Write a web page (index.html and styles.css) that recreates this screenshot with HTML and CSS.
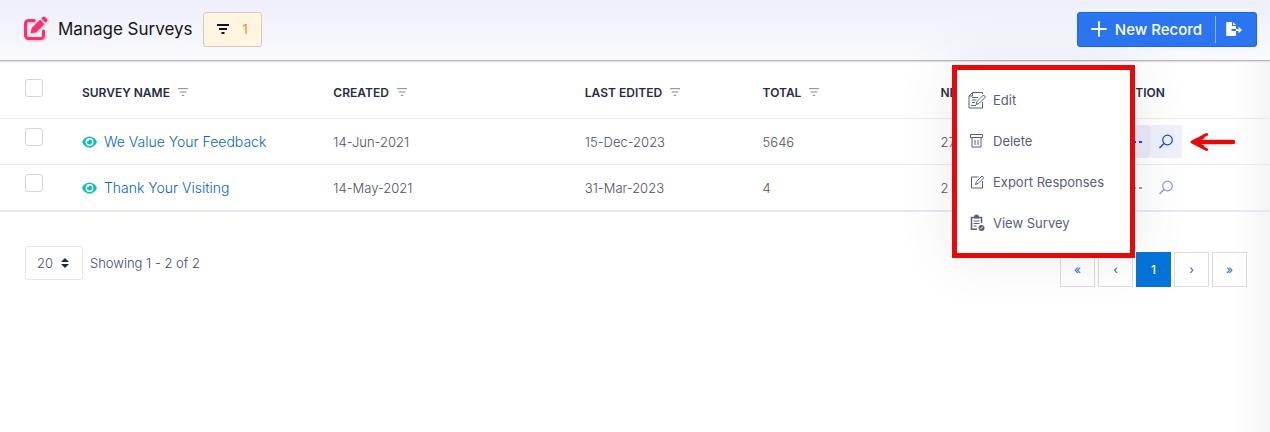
FILE: index.html
```html
<!DOCTYPE html>
<html lang="en">
<head>
  <meta charset="UTF-8" />
  <meta name="viewport" content="width=device-width, initial-scale=1.0">
  <title>Manage Surveys</title>
  <link rel="stylesheet" href="styles.css">
</head>
<body>

<!-- shared icons -->
<svg class="sprite" width="0" height="0" aria-hidden="true">
  <symbol id="filter" viewBox="0 0 14 12">
    <path d="M1 2h12M3 6h8M5.500 10h3" fill="none" stroke="currentColor" />
  </symbol>
  <symbol id="eye" viewBox="0 0 16 12">
    <path fill="currentColor" fill-rule="evenodd" d="M8 0C4.400 0 1.500 2.300 0 6c1.500 3.700 4.400 6 8 6s6.500-2.300 8-6c-1.500-3.700-4.400-6-8-6zm0 1.800a4.200 4.200 0 1 1 0 8.400 4.200 4.200 0 0 1 0-8.400z" />
    <path fill="currentColor" d="M8 3.300c-.3 0-.5 0-.7.1.4 1-.5 2.100-1.900 1.900A2.700 2.700 0 1 0 8 3.300z" />
  </symbol>
  <symbol id="search" viewBox="0 0 16 16">
    <g fill="none" stroke="currentColor" stroke-width="1.200">
      <circle cx="9.500" cy="6" r="4.800" />
      <path d="M6 9.500L1.500 14" stroke-width="1.500" />
    </g>
  </symbol>
</svg>

<header class="topbar">
  <svg class="logo" width="25" height="26" viewBox="0 0 25 26" aria-hidden="true">
    <path d="M11 4.500H5.500a3 3 0 0 0-3 3v12a3 3 0 0 0 3 3h12a3 3 0 0 0 3-3V15" fill="none" stroke="#fb2f72" stroke-width="3" stroke-linecap="round" />
    <path d="M7.500 17.500l1.200-5.500 8.400-8.400 4.300 4.300-8.400 8.400z" fill="#fb2f72" />
    <path d="M18.200 2.500l1.200-1.200a2 2 0 0 1 2.800 0l1.500 1.500a2 2 0 0 1 0 2.800l-1.200 1.200z" fill="#fb2f72" />
  </svg>
  <h1>Manage Surveys</h1>
  <button class="filter-count" type="button" aria-label="Active filters">
    <svg width="14" height="12" aria-hidden="true"><use href="#filter" /></svg>
    <span>1</span>
  </button>
  <div class="record-group">
    <button class="new-record" type="button">
      <svg width="16" height="16" viewBox="0 0 16 16" aria-hidden="true"><path d="M8 1v14M1 8h14" stroke="currentColor" stroke-width="1.800" stroke-linecap="round" /></svg>
      New Record
    </button>
    <button class="export" type="button" aria-label="Export">
      <svg width="16" height="14" viewBox="0 0 16 14" aria-hidden="true">
        <path fill="currentColor" d="M1 0h5v4h4v3H5.500v2H10v4.200a.8.800 0 0 1-.8.800H1a.8.800 0 0 1-.8-.8V.8A.8.800 0 0 1 1 0zM7 0l3 3H7zM10 7h2.500V4.800L16 8l-3.500 3.200V9H10z" />
      </svg>
    </button>
  </div>
</header>

<main>
  <table class="surveys">
    <thead>
      <tr>
        <th class="col-check"><input type="checkbox" aria-label="Select all"></th>
        <th class="col-wide">SURVEY NAME <button type="button" aria-label="Filter survey name"><svg width="12" height="10"><use href="#filter" /></svg></button></th>
        <th class="col-wide">CREATED <button type="button" aria-label="Filter created"><svg width="12" height="10"><use href="#filter" /></svg></button></th>
        <th class="col-mid">LAST EDITED <button type="button" aria-label="Filter last edited"><svg width="12" height="10"><use href="#filter" /></svg></button></th>
        <th class="col-mid">TOTAL <button type="button" aria-label="Filter total"><svg width="12" height="10"><use href="#filter" /></svg></button></th>
        <th class="col-mid">NEW</th>
        <th>ACTION</th>
      </tr>
    </thead>
    <tbody>
      <tr>
        <td class="col-check"><input type="checkbox" aria-label="Select We Value Your Feedback"></td>
        <td><a class="name" href="#"><svg width="15" height="12"><use href="#eye" /></svg>We Value Your Feedback</a></td>
        <td>14-Jun-2021</td>
        <td>15-Dec-2023</td>
        <td>5646</td>
        <td>27</td>
        <td>
          <div class="actions active">
            <button class="more" type="button" aria-label="More actions"><i></i><i></i><i></i></button>
            <button type="button" aria-label="View"><svg width="16" height="16"><use href="#search" /></svg></button>
            <svg class="pointer" width="47" height="18" viewBox="0 0 47 18" aria-hidden="true">
              <path d="M6 9h38" stroke="#e80808" stroke-width="4.500" stroke-linecap="round" />
              <path d="M17.500 1.500L3 9l14.500 7.500M14 4.500L5 9l9 4.500" fill="none" stroke="#e80808" stroke-width="3" stroke-linecap="round" stroke-linejoin="round" />
            </svg>
          </div>
        </td>
      </tr>
      <tr>
        <td class="col-check"><input type="checkbox" aria-label="Select Thank Your Visiting"></td>
        <td><a class="name" href="#"><svg width="15" height="12"><use href="#eye" /></svg>Thank Your Visiting</a></td>
        <td>14-May-2021</td>
        <td>31-Mar-2023</td>
        <td>4</td>
        <td>2</td>
        <td>
          <div class="actions">
            <button class="more" type="button" aria-label="More actions"><i></i><i></i><i></i></button>
            <button type="button" aria-label="View"><svg width="16" height="16"><use href="#search" /></svg></button>
          </div>
        </td>
      </tr>
    </tbody>
  </table>

  <div class="table-footer">
    <div class="page-size">
      <select aria-label="Rows per page"><option>20</option></select>
      <svg width="8" height="10" viewBox="0 0 8 10" aria-hidden="true"><path d="M0 4l4-4 4 4zM0 6l4 4 4-4z" fill="#1f2937" /></svg>
    </div>
    <span class="showing">Showing 1 - 2 of 2</span>
    <nav class="pager" aria-label="Pages">
      <a href="#">«</a>
      <a href="#">‹</a>
      <a class="current" href="#">1</a>
      <a href="#">›</a>
      <a href="#">»</a>
    </nav>
  </div>

  <!-- row action menu -->
  <div class="menu">
    <button type="button">
      <svg width="18" height="18" viewBox="0 0 18 18" aria-hidden="true">
        <path d="M14.500 3V1.500h-10L1 5v12h13.500v-6M4.500 1.500V5H1M4 6.500h6M4 9h4.500M4 11.500h3M3 14.500h5M8 13.500l1-3L15.500 4 17.500 6l-6.500 6.500z" />
      </svg>
      Edit
    </button>
    <button type="button">
      <svg width="18" height="18" viewBox="0 0 18 18" aria-hidden="true">
        <path d="M2.500 2.500h12v3h-12zM4 5.500v9.500h9V5.500M7 8v5M10 8v5" />
      </svg>
      Delete
    </button>
    <button type="button">
      <svg width="18" height="18" viewBox="0 0 18 18" aria-hidden="true">
        <path d="M10.500 4h-7v11h11V8" />
        <path d="M7.500 11.500l1-3L14 3l1.800 1.800-5.500 5.500z" />
      </svg>
      Export Responses
    </button>
    <button type="button">
      <svg width="18" height="18" viewBox="0 0 18 18" aria-hidden="true">
        <path d="M9 15.200H3.500V3.500h10V9" stroke-width="1.500" />
        <path d="M6 3a2.500 2.500 0 0 1 5 0v1.500H6z" fill="#575d7b" stroke="none" />
        <path d="M5.500 7h6M5.500 9.500h6M5.500 12h3" stroke-width="1.200" />
        <circle cx="13.500" cy="14" r="3" fill="#575d7b" stroke="none" />
        <path d="M12 15.500l3-3" stroke="#fff" />
      </svg>
      View Survey
    </button>
  </div>
</main>

</body>
</html>
```

FILE: styles.css
```css
* {
  box-sizing: border-box;
}

body {
  margin: 0;
  min-height: 100vh;
  background: linear-gradient(to left, #f4f4f6, #fff 36px);
  color: #4b5060;
  font-family: Inter, sans-serif;
  font-size: 13px;
  font-weight: 300;
}

button, select {
  font: inherit;
  color: inherit;
  border: none;
  background: none;
  padding: 0;
  cursor: pointer;
}

a {
  color: #0568bd;
  text-decoration: none;
}

svg {
  flex: none;
}

.sprite {
  position: absolute;
}

/* top bar */
.topbar {
  display: flex;
  align-items: center;
  height: 61px;
  padding: 0 13px 2px 23px;
  background: linear-gradient(#eeeff9, #f9f9ff);
  border-bottom: 1px solid #b4b4bc;
  box-shadow: 0 1px 1px #e2e2e6;
}

.logo {
  filter: drop-shadow(1px 1px 1px #bbb);
}

h1 {
  margin: 0 10px;
  color: #14151c;
  font-size: 17px;
  font-weight: 400;
}

.filter-count {
  display: flex;
  align-items: center;
  justify-content: center;
  gap: 12px;
  width: 59px;
  height: 35px;
  border: 1px solid #d8c8bd;
  border-radius: 3px;
  background: #fff5e1;
  color: #14151c;
}

.filter-count svg {
  stroke-width: 2;
}

.filter-count span {
  color: #f58a07;
  font-weight: 400;
}

.record-group {
  display: flex;
  align-items: center;
  height: 35px;
  margin-left: auto;
  border: 1px solid #1268ee;
  border-radius: 3px;
  background: #2b76f0;
  color: #fff;
}

.new-record {
  display: flex;
  align-items: center;
  gap: 8px;
  padding: 0 13px;
  font-size: 15px;
  font-weight: 500;
}

.export {
  display: flex;
  align-items: center;
  height: 27px;
  padding: 0 14px 0 10px;
  border-left: 1px solid #8db5f8;
}

/* table */
main {
  position: relative;
}

.surveys {
  width: 100%;
  table-layout: fixed;
  border-collapse: separate;
  border-spacing: 0;
  border-bottom: 1px solid #e6e6ef;
}

.surveys th,
.surveys td {
  height: 46px;
  padding: 0;
  border-bottom: 1px solid #e9e9f1;
  text-align: left;
}

.surveys th {
  height: 58px;
  padding-top: 6px;
  color: #262c45;
  font-size: 12px;
  font-weight: 600;
}

.surveys th button {
  margin-left: 4px;
  color: #6e6e74;
}

.surveys .col-check {
  width: 6.45%;
  padding: 9px 0 0 25px;
  vertical-align: top;
}

.surveys th.col-check {
  padding-top: 18px;
}

.col-wide {
  width: 19.8%;
}

.col-mid {
  width: 14%;
}

input[type="checkbox"] {
  display: block;
  appearance: none;
  width: 18px;
  height: 18px;
  margin: 0;
  border: 1px solid #cfd4e2;
  border-radius: 3px;
  background: #fff;
}

.name {
  display: flex;
  align-items: center;
  gap: 7px;
  font-size: 14px;
}

.name svg {
  color: #12bfae;
}

.actions {
  display: flex;
  align-items: center;
  color: #8d97dc;
}

.actions button {
  display: flex;
  align-items: center;
  justify-content: center;
  gap: 3px;
  width: 32px;
  height: 33px;
  border-radius: 3px;
}

.actions i {
  width: 3px;
  height: 2px;
  background: currentColor;
}

.actions.active {
  color: #1142e8;
}

.actions.active button {
  background: #eef0fe;
}

.actions.active .more {
  background: #e7e9f8;
}

.pointer {
  margin-left: 7px;
}

/* footer */
.table-footer {
  display: flex;
  align-items: flex-start;
  padding: 34px 23px 0 25px;
}

.page-size {
  position: relative;
}

.page-size select {
  appearance: none;
  width: 58px;
  height: 34px;
  padding-left: 11px;
  border: 1px solid #e2e3ee;
  border-radius: 3px;
  background: #fff;
}

.page-size svg {
  position: absolute;
  top: 12px;
  right: 14px;
  pointer-events: none;
}

.showing {
  margin-left: 7px;
  color: #3d4380;
  line-height: 34px;
}

.pager {
  display: flex;
  gap: 3px;
  margin: 6px 0 0 auto;
}

.pager a {
  display: flex;
  align-items: center;
  justify-content: center;
  width: 35px;
  height: 35px;
  border: 1px solid #dcdcde;
  font-size: 12px;
  font-weight: 400;
}

.pager .current {
  border-color: #0473da;
  background: #0473da;
  color: #fff;
  font-weight: 500;
}

/* popup menu */
.menu {
  position: absolute;
  top: 4px;
  right: 135px;
  display: grid;
  gap: 1px;
  width: 183px;
  padding: 10px 0;
  border: 5px solid #e80808;
  background: #fff;
  box-shadow: 0 0 50px rgba(80, 80, 110, 0.12);
}

.menu button {
  display: flex;
  align-items: center;
  gap: 7px;
  height: 40px;
  padding-left: 11px;
  color: #575d7b;
  font-weight: 400;
}

.menu svg {
  fill: none;
  stroke: #575d7b;
}
```
